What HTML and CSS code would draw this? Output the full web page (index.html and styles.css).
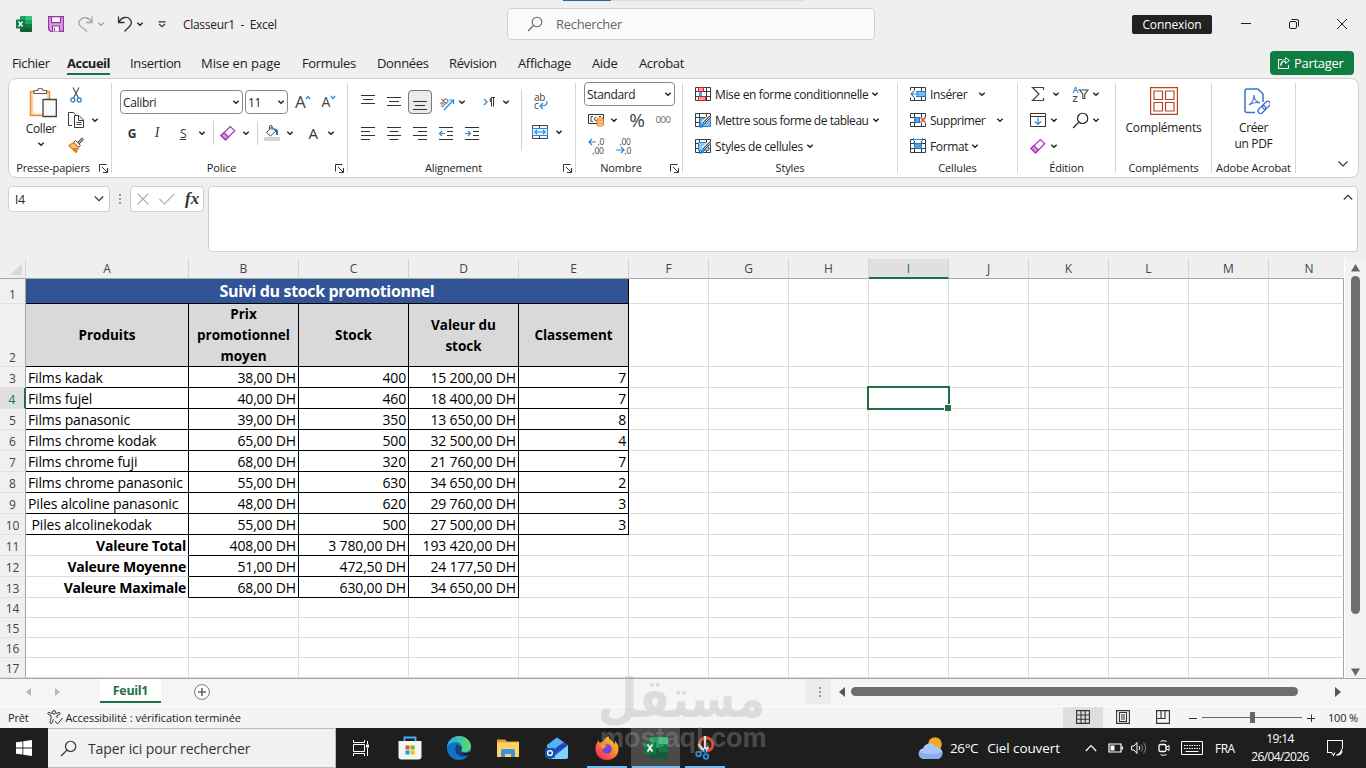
FILE: index.html
```html
<!DOCTYPE html>
<html lang="fr">

<head>
  <meta charset="UTF-8">
  <meta name="viewport" content="width=device-width, initial-scale=1.0">
  <title>Classeur1 - Excel</title>
  <link rel="stylesheet" href="styles.css">
</head>

<body>

  <!-- Shared icons -->
  <svg class="sprite" width="0" height="0">
    <symbol id="chev" viewBox="0 0 8 8"><path d="M1.3 2.700 4 5.300 6.700 2.700" fill="none" stroke="currentColor" stroke-width="1.400"/></symbol>
    <symbol id="launch" viewBox="0 0 9 9"><path d="M.5 7.5V.5h7M3 3l5 5M8.500 4v4.500H4" fill="none" stroke="#333"/></symbol>
    <symbol id="eraser" viewBox="0 0 16 16"><path d="M1 10.500 10.300 1.500l4.500 4.300L5.500 15z" fill="#fdf5ff" stroke="#9b3fa8" stroke-width="1.200"/><path d="M1 10.500 4 7.600l4.500 4.400-3 3z" fill="#d690df" stroke="#9b3fa8" stroke-width="1.200"/></symbol>
    <symbol id="loupe" viewBox="0 0 16 16"><circle cx="10" cy="6" r="4.800" fill="none" stroke="currentColor" stroke-width="1.100"/><path d="M6.500 9.500 1 15" stroke="currentColor" stroke-width="1.200"/></symbol>
    <symbol id="grid" viewBox="0 0 16 16"><path d="M.5 1.500h15v13H.5zM.5 5.500h15M.5 10.500h15M4.500 1.500v13M11.500 1.500v13" fill="#fff" stroke="#3b3b3b"/></symbol>
    <symbol id="brush" viewBox="0 0 16 16"><path d="M15.500 4 8 11" stroke="#fff" stroke-width="4"/><path d="M15.500 4.500 8.500 11.500" stroke="#444" stroke-width="2.600"/><path d="M15.300 4.700 9 11" stroke="#fff" stroke-width=".8"/><path d="M4 15.500c2 0 1.500-3.500 3.500-4l1.800 1.700c0 2-2.500 3-5.300 2.300z" fill="#2b88d8"/></symbol>
  </svg>

  <div class="window">

    <header class="titlebar">
      <svg class="app-icon" width="16" height="16" viewBox="0 0 16 16"><path d="M5 0h10a1 1 0 0 1 1 1v14a1 1 0 0 1-1 1H5a1 1 0 0 1-1-1V1a1 1 0 0 1 1-1z" fill="#21a366"/><path d="M10 0h5a1 1 0 0 1 1 1v3h-6z" fill="#33c481"/><path d="M4 8h12v7a1 1 0 0 1-1 1H5a1 1 0 0 1-1-1z" fill="#185c37"/><path d="M10 8h6v4h-6z" fill="#107c41"/><rect y="3.500" width="9" height="9" rx="1" fill="#107c41"/><path d="M2.500 5.500 6.500 10.500M6.500 5.500 2.500 10.500" stroke="#fff" stroke-width="1.400"/></svg>
      <svg class="save" width="16" height="16" viewBox="0 0 16 16"><path d="M.6.6h14.800v14.800H2.500L.6 13.500z" fill="#dc9ae4" stroke="#8e3b9b" stroke-width="1.200"/><path d="M3.500.6h9v6h-9zM4.500 15.400V10h7v5.400" fill="#fbf3fc" stroke="#8e3b9b" stroke-width="1.200"/><path d="M6.500 12v3" stroke="#8e3b9b"/></svg>
      <svg class="redo faded" width="16" height="16" viewBox="0 0 16 16"><path d="M14 .5v6H8M13.500 6C11 1 5.500.5 2.500 3.500S.8 10 5 12l4 3.500" fill="none" stroke="currentColor" stroke-width="1.300"/></svg>
      <svg class="c faded"><use href="#chev"/></svg>
      <svg class="undo" width="16" height="16" viewBox="0 0 16 16"><path d="M1.500.5v6h6M2 6C5 .5 10 .5 12.700 3s1.800 6-.7 8l-4.500 4.500" fill="none" stroke="#333" stroke-width="1.300"/></svg>
      <svg class="c"><use href="#chev"/></svg>
      <svg class="more" width="8" height="7" viewBox="0 0 8 7"><path d="M.5.800h7M1 3l3 2.800L7 3" fill="none" stroke="#333" stroke-width="1.200"/></svg>
      <span class="doc-name">Classeur1&nbsp; -&nbsp; Excel</span>
      <div class="search">
        <svg width="16" height="16"><use href="#loupe"/></svg>
        <span>Rechercher</span>
      </div>
      <button class="login">Connexion</button>
      <div class="controls">
        <svg width="12" height="12" viewBox="0 0 12 12"><path d="M1 5.500h10" stroke="#222"/></svg>
        <svg width="12" height="12" viewBox="0 0 12 12"><rect x="1.500" y="3.500" width="7" height="7" rx="1.500" fill="none" stroke="#222"/><path d="M3.500 1.500H9A1.500 1.500 0 0 1 10.500 3v5.500" fill="none" stroke="#222"/></svg>
        <svg width="12" height="12" viewBox="0 0 12 12"><path d="M1 1l10 10M11 1 1 11" stroke="#222"/></svg>
      </div>
    </header>
    <div class="load-line"><i></i></div>

    <nav class="tabs">
      <a>Fichier</a>
      <a class="active">Accueil</a>
      <a>Insertion</a>
      <a class="layout">Mise en page</a>
      <a>Formules</a>
      <a>Données</a>
      <a>Révision</a>
      <a>Affichage</a>
      <a>Aide</a>
      <a>Acrobat</a>
      <button class="share">
        <svg width="12" height="12" viewBox="0 0 12 12"><path d="M4 2.500H.5v9h10V8M2.800 8.500C3 5.500 5 4.300 7.500 4.300V6.500L11.500 3.500 7.500.6v2C5 2.800 3 4.500 2.800 8.500z" fill="none" stroke="#fff"/></svg>
        <span>Partager</span>
      </button>
    </nav>

    <section class="ribbon">
      <div class="group clipboard">
        <div class="body">
          <div class="paste">
            <svg width="28" height="31" viewBox="0 0 28 31"><path d="M1.500 4.500h19v24h-19z" fill="#fbdcae" stroke="#e3922f" stroke-width="1.500"/><path d="M4.500 7.500h13v19h-13z" fill="#fff"/><path d="M5 6.500v-3h3.500a2.800 2.800 0 0 1 5.500 0h3.500v3z" fill="#fff" stroke="#666" stroke-width="1.200"/><path d="M14 12.500h13.300v17H14z" fill="#fafafa" stroke="#444" stroke-width="1.300"/></svg>
            <span>Coller</span>
            <svg class="c"><use href="#chev"/></svg>
          </div>
          <div class="clip-tools">
            <svg width="12" height="16" viewBox="0 0 12 16"><path d="M3 .5 8.500 11M9 .5 3.500 11" stroke="#555" stroke-width="1.200"/><circle cx="2.800" cy="13" r="2" fill="#fff" stroke="#2b88d8" stroke-width="1.300"/><circle cx="9.200" cy="13" r="2" fill="#fff" stroke="#2b88d8" stroke-width="1.300"/></svg>
            <div class="pair">
              <svg width="16" height="16" viewBox="0 0 16 16"><path d="M4 13.500H.5V.5h5l2 2M4.500 4" fill="#fff" stroke="#3b3b3b"/><path d="M6.500 3.500h4.500l4.500 4.500v7.500h-9z" fill="#fff" stroke="#3b3b3b"/><path d="M10.500 4v4.500h5M8.500 10.500h5M8.500 12.500h5" fill="none" stroke="#3b3b3b"/></svg>
              <svg class="c"><use href="#chev"/></svg>
            </div>
            <svg width="16" height="16" viewBox="0 0 16 16"><path d="M15 1.500 10.500 6" stroke="#444" stroke-width="3"/><path d="M14.700 1.800 10.500 6" stroke="#fff"/><path d="M7.500 3.500l5 5-2 1.800-5-5z" fill="#fff" stroke="#444"/><path d="M5.500 5.500l5 5L8 15.500 1 8.500z" fill="#f9c27a" stroke="#e07b1a" stroke-width="1.200"/><path d="M4 11.500l5-1L8 15z" fill="#e07b1a"/></svg>
          </div>
        </div>
        <div class="caption"><span>Presse-papiers</span><svg class="l"><use href="#launch"/></svg></div>
      </div>

      <div class="group font">
        <div class="body">
          <div class="row font-top">
            <div class="combo name"><span>Calibri</span><svg class="c"><use href="#chev"/></svg></div>
            <div class="combo size"><span>11</span><svg class="c"><use href="#chev"/></svg></div>
            <div class="glyph big">A<svg width="6" height="5" viewBox="0 0 6 5"><path d="M.8 4 3 1.500 5.200 4" fill="none" stroke="#2b88d8" stroke-width="1.200"/></svg></div>
            <div class="glyph mid">A<svg width="6" height="5" viewBox="0 0 6 5"><path d="M.8 1 3 3.500 5.200 1" fill="none" stroke="#2b88d8" stroke-width="1.200"/></svg></div>
          </div>
          <div class="row font-bottom">
            <b>G</b><em>I</em><u>S</u>
            <svg class="c"><use href="#chev"/></svg>
            <i class="bar"></i>
            <svg width="16" height="16"><use href="#eraser"/></svg>
            <svg class="c"><use href="#chev"/></svg>
            <i class="bar"></i>
            <svg width="16" height="16" viewBox="0 0 16 16"><rect y="12" width="16" height="4" fill="#d4d4d4"/><path d="M7.500 2 2.500 7.500l4 3.500L12 6zM5.500 4V1.500a1 1 0 0 1 2.500 0V5" fill="#fff" stroke="#444"/><path d="M10 4.500c3-.5 3.500 2 3 5.500" fill="none" stroke="#1f6fb8" stroke-width="2"/></svg>
            <svg class="c"><use href="#chev"/></svg>
            <span class="color">A</span>
            <svg class="c"><use href="#chev"/></svg>
          </div>
        </div>
        <div class="caption"><span>Police</span><svg class="l"><use href="#launch"/></svg></div>
      </div>

      <div class="group align">
        <div class="body">
          <div class="align-main">
            <div class="row align-row">
              <svg width="16" height="16" viewBox="0 0 16 16"><path d="M1 1.500h14M3 5.500h10M1 9.500h14" stroke="#333"/></svg>
              <svg width="16" height="16" viewBox="0 0 16 16"><path d="M1 3.500h14M3 7.500h10M1 11.500h14" stroke="#333"/></svg>
              <div class="pressed"><svg width="16" height="16" viewBox="0 0 16 16"><path d="M1 7.500h14M3 11.500h10M1 15.500h14" stroke="#333"/></svg></div>
              <svg width="17" height="17" viewBox="0 0 17 17"><text x="1" y="12" transform="rotate(-45 5 9)" class="tiny">ab</text><path d="M6 16 15 6.500M11 6h4.500v4" fill="none" stroke="#2b88d8" stroke-width="1.200"/></svg>
              <svg class="c"><use href="#chev"/></svg>
              <svg width="13" height="12" viewBox="0 0 13 12"><path d="M1 3l3 3-3 3" fill="none" stroke="#2b88d8" stroke-width="1.300"/><path d="M8.500 10.500v-9h3.500M10.500 10.500v-9" stroke="#333" fill="none"/><path d="M9 1.500a2.500 2.500 0 0 0 0 5z" fill="#555"/></svg>
              <svg class="c last"><use href="#chev"/></svg>
            </div>
            <div class="row align-row">
              <svg width="16" height="16" viewBox="0 0 16 16"><path d="M1 2.500h14M1 6.500h9M1 10.500h14M1 14.500h9" stroke="#333"/></svg>
              <svg width="16" height="16" viewBox="0 0 16 16"><path d="M1 2.500h14M3.500 6.500h9M1 10.500h14M3.500 14.500h9" stroke="#333"/></svg>
              <svg width="16" height="16" viewBox="0 0 16 16"><path d="M1 2.500h14M6 6.500h9M1 10.500h14M6 14.500h9" stroke="#333"/></svg>
              <svg width="16" height="16" viewBox="0 0 16 16"><path d="M1 2.500h14M9 6.500h6M9 10.500h6M1 14.500h14" stroke="#333"/><path d="M7 8.500H1.500M4 6 1.500 8.500 4 11" fill="none" stroke="#2b88d8" stroke-width="1.200"/></svg>
              <svg width="16" height="16" viewBox="0 0 16 16"><path d="M1 2.500h14M9 6.500h6M9 10.500h6M1 14.500h14" stroke="#333"/><path d="M1 8.500h5.500M4 6l2.500 2.500L4 11" fill="none" stroke="#2b88d8" stroke-width="1.200"/></svg>
            </div>
          </div>
          <i class="bar tall"></i>
          <div class="align-side">
            <svg width="16" height="18" viewBox="0 0 16 18"><text x="2" y="8" class="wrap">ab</text><text x="2" y="16" class="wrap">c</text><path d="M15 8c.5 4-2 5-6.500 5M11 10l-3 3 3 3" fill="none" stroke="#2b88d8" stroke-width="1.200"/></svg>
            <div class="pair">
              <svg width="16" height="16" viewBox="0 0 16 16"><path d="M.5 1.500h15v13H.5zM7.500 1.500v13" fill="#fff" stroke="#3b3b3b"/><path d="M.5 4.500h15v7H.5z" fill="#e3f1fc" stroke="#2b88d8"/><path d="M3 8h10M5 6 3 8l2 2M11 6l2 2-2 2" fill="none" stroke="#2b88d8" stroke-width="1.100"/></svg>
              <svg class="c"><use href="#chev"/></svg>
            </div>
          </div>
        </div>
        <div class="caption"><span>Alignement</span><svg class="l"><use href="#launch"/></svg></div>
      </div>

      <div class="group number">
        <div class="body">
          <div class="combo format"><span>Standard</span><svg class="c"><use href="#chev"/></svg></div>
          <div class="row num-row">
            <svg width="16" height="14" viewBox="0 0 16 14"><path d="M.5 1.500h15v9H.5z" fill="#fff" stroke="#333"/><path d="M5 3.500H3v5h2M8.500 4a2 2 0 1 0 0 4M11 3.500h2" fill="none" stroke="#444"/><path d="M9 6c0-1.500 6.500-1.500 6.500 0v6c0 1.500-6.500 1.500-6.500 0z" fill="#fbd1a2" stroke="#e07b1a"/><path d="M9 6.500c1 1 5.500 1 6.500 0M9 9.500c1 1 5.500 1 6.500 0" fill="none" stroke="#e07b1a"/></svg>
            <svg class="c"><use href="#chev"/></svg>
            <span class="percent">%</span>
            <span class="thousands">000</span>
          </div>
          <div class="row dec-row">
            <svg width="17" height="18" viewBox="0 0 17 18"><text x="9.500" y="8" class="dec">,0</text><text x="4.500" y="16.500" class="dec">,00</text><path d="M8 5H1M4 2 1 5l3 3" fill="none" stroke="#2b88d8" stroke-width="1.200"/></svg>
            <svg width="17" height="18" viewBox="0 0 17 18"><text x="4.500" y="8" class="dec">,00</text><text x="9.500" y="16.500" class="dec">,0</text><path d="M1 13h8M6 10l3 3-3 3" fill="none" stroke="#2b88d8" stroke-width="1.200"/></svg>
          </div>
        </div>
        <div class="caption"><span>Nombre</span><svg class="l"><use href="#launch"/></svg></div>
      </div>

      <div class="group list styles">
        <div class="body">
          <div class="item"><svg width="16" height="16"><use href="#grid"/><path d="M3.500 1.500h5v4h-5zM3.500 10.500h7v4h-7z" fill="#ff9a9a" stroke="#c8282d"/><path d="M4 6h3v4H4z" fill="#4ba0e6"/></svg><span>Mise en forme conditionnelle</span><svg class="c"><use href="#chev"/></svg></div>
          <div class="item"><svg width="16" height="16"><use href="#grid"/><path d="M5 6h10.500v8.500H5z" fill="#7dbcf2" stroke="#2b88d8"/><use href="#brush"/></svg><span class="tight">Mettre sous forme de tableau</span><svg class="c"><use href="#chev"/></svg></div>
          <div class="item"><svg width="16" height="16"><use href="#grid"/><path d="M3.500 4.500h10v8h-10z" fill="#8fc6f5" stroke="#2b88d8"/><use href="#brush"/></svg><span>Styles de cellules</span><svg class="c"><use href="#chev"/></svg></div>
        </div>
        <div class="caption"><span>Styles</span></div>
      </div>

      <div class="group list cells">
        <div class="body">
          <div class="item wide"><svg width="16" height="16"><use href="#grid"/><path d="M5.500 5.500h10v5h-10z" fill="#7dbcf2" stroke="#1f78c8"/><path d="M0 4.500h6v7H0z" fill="#fff"/><path d="M9 8H1M4 5 1 8l3 3" fill="none" stroke="#2b88d8" stroke-width="1.200"/></svg><span>Insérer</span><svg class="c"><use href="#chev"/></svg></div>
          <div class="item wide"><svg width="16" height="16"><use href="#grid"/><path d="M0 6h4v4H0zM10 5.200h6v6h-6z" fill="#fff"/><path d="M4.500 5.500h5v5h-5z" fill="#4ba0e6" stroke="#1f78c8"/><path d="M10.500 5.500 15.500 10.500M15.500 5.500l-5 5" stroke="#e0413d" stroke-width="1.400"/></svg><span class="tight">Supprimer</span><svg class="c"><use href="#chev"/></svg></div>
          <div class="item"><svg width="16" height="16"><use href="#grid"/><path d="M3 0h10v3H3z" fill="#fff"/><path d="M3.500 0v3M12.500 0v3M3.500 1.500h9" stroke="#2b88d8"/><path d="M4.500 5.500h7v5h-7z" fill="#4ba0e6" stroke="#1f78c8"/></svg><span>Format</span><svg class="c"><use href="#chev"/></svg></div>
        </div>
        <div class="caption"><span>Cellules</span></div>
      </div>

      <div class="group edit">
        <div class="body">
          <div class="row edit-row first">
            <svg width="14" height="16" viewBox="0 0 14 16"><path d="M12.500 4V1.500H1.500L8 8l-6.500 6.500h11V12" fill="none" stroke="#444" stroke-width="1.200"/></svg>
            <svg class="c"><use href="#chev"/></svg>
            <svg width="17" height="18" viewBox="0 0 17 18"><text x=".5" y="8" class="az blue">A</text><text x=".5" y="16.500" class="az">Z</text><path d="M7.500 5h8.500l-3.200 4v4.500h-2V9z" fill="#fff" stroke="#444" stroke-width="1.100"/></svg>
            <svg class="c"><use href="#chev"/></svg>
          </div>
          <div class="row edit-row">
            <svg width="16" height="16" viewBox="0 0 16 16"><path d="M.5 1.500h15v13H.5zM.5 4.500h15" fill="#fff" stroke="#333"/><path d="M8 5.500v7M5 9.500l3 3 3-3" fill="none" stroke="#2b88d8" stroke-width="1.200"/></svg>
            <svg class="c"><use href="#chev"/></svg>
            <svg width="17" height="17" viewBox="0 0 16 16"><use href="#loupe"/></svg>
            <svg class="c last"><use href="#chev"/></svg>
          </div>
          <div class="row edit-row">
            <svg width="16" height="16"><use href="#eraser"/></svg>
            <svg class="c"><use href="#chev"/></svg>
          </div>
        </div>
        <div class="caption"><span>Édition</span></div>
      </div>

      <div class="group addins large">
        <div class="body">
          <svg width="28" height="28" viewBox="0 0 28 28"><path d="M.6.6h26.800v26.800H.6zM4 4h8.500v8.500H4zM15.500 4H24v8.500h-8.500zM4 15.500h8.500V24H4zM15.500 15.500H24V24h-8.500z" fill="none" stroke="#b5461e" stroke-width="1.200"/></svg>
          <span>Compléments</span>
        </div>
        <div class="caption"><span>Compléments</span></div>
      </div>

      <div class="group acrobat large">
        <div class="body">
          <svg width="26" height="28" viewBox="0 0 26 28"><path d="M11 24.500H3a2 2 0 0 1-2-2V3a2 2 0 0 1 2-2h11l5 5v8" fill="none" stroke="#3b6fd1" stroke-width="1.500"/><path d="M5 17c3-2 5-6 5-10 0 4 3 7 6 8-4-1-8 0-11 2z" fill="none" stroke="#3b6fd1" stroke-width="1.100"/><rect x="17" y="15.500" width="5" height="9" rx="2.500" transform="rotate(45 19.500 20) translate(0 -4)" fill="none" stroke="#3b6fd1" stroke-width="1.300"/><rect x="14" y="18.500" width="5" height="9" rx="2.500" transform="rotate(45 16.500 23) translate(0 -2)" fill="none" stroke="#3b6fd1" stroke-width="1.300"/></svg>
          <span>Créer<br>un PDF</span>
        </div>
        <div class="caption"><span>Adobe Acrobat</span></div>
      </div>

      <div class="collapse"><svg width="12" height="8" viewBox="0 0 12 8"><path d="M1.500 1.500 6 6l4.500-4.500" fill="none" stroke="#333" stroke-width="1.200"/></svg></div>
    </section>

    <section class="formula">
      <div class="name-box"><span>I4</span><svg width="10" height="8" viewBox="0 0 10 8"><path d="M.8 1.500 5 5.700l4.200-4.200" fill="none" stroke="#333" stroke-width="1.200"/></svg></div>
      <div class="dots"><i></i><i></i><i></i></div>
      <div class="fx">
        <svg width="12" height="12" viewBox="0 0 12 12"><path d="M.5.5l11 11M11.500.5l-11 11" stroke="#b0b0b0" stroke-width="1.200"/></svg>
        <svg width="16" height="12" viewBox="0 0 16 12"><path d="M.5 6 5.500 11 15.500.8" fill="none" stroke="#b0b0b0" stroke-width="1.200"/></svg>
        <em>fx</em>
      </div>
      <div class="input"><svg width="10" height="7" viewBox="0 0 10 7"><path d="M.8 5.500 5 1.300l4.200 4.200" fill="none" stroke="#333" stroke-width="1.200"/></svg></div>
    </section>

    <main class="sheet">
      <div class="cells-area">
        <table>
          <colgroup id="cols"></colgroup>
          <thead><tr id="letters"></tr></thead>
          <tbody id="rows"></tbody>
        </table>
        <div class="selection"></div>
      </div>
      <div class="vscroll">
        <svg width="9" height="8" viewBox="0 0 9 8"><path d="M4.500 0 9 7.500H0z" fill="#666"/></svg>
        <i></i>
        <svg width="9" height="8" viewBox="0 0 9 8"><path d="M4.500 8 9 .5H0z" fill="#666"/></svg>
      </div>
    </main>

    <div class="sheet-tabs">
      <svg class="prev" width="5" height="8" viewBox="0 0 5 8"><path d="M5 0v8L0 4z" fill="#b8b8b8"/></svg>
      <svg class="next" width="5" height="8" viewBox="0 0 5 8"><path d="M0 0v8l5-4z" fill="#b8b8b8"/></svg>
      <div class="tab">Feuil1</div>
      <svg class="add" width="16" height="16" viewBox="0 0 16 16"><circle cx="8" cy="8" r="7.400" fill="#fff" stroke="#777"/><path d="M8 4v8M4 8h8" stroke="#666" stroke-width="1.600"/></svg>
      <div class="hscroll">
        <div class="dots"><i></i><i></i><i></i></div>
        <svg width="8" height="10" viewBox="0 0 8 10"><path d="M7 0v10L1 5z" fill="#555"/></svg>
        <i class="thumb"></i>
        <svg width="8" height="10" viewBox="0 0 8 10"><path d="M1 0v10l6-5z" fill="#555"/></svg>
      </div>
    </div>

    <footer class="status">
      <span>Prêt</span>
      <svg class="access" width="16" height="15" viewBox="0 0 16 15"><circle cx="7" cy="2.300" r="1.700" fill="none" stroke="#333"/><path d="M5 3.500 2 2.500c-1.500 0-1.500 1.500-.5 2L4 5.500c.5 2-.5 4-1 7 .3 1.500 1.500 1.500 2 .5l1.500-4M9 3.500l3-1c1.500 0 1.500 1.500.5 2L10 5.500V8M8 11l2.500 3L15.500 8" fill="none" stroke="#333"/></svg>
      <span class="check">Accessibilité : vérification terminée</span>
      <div class="views">
        <div class="on"><svg width="14" height="14" viewBox="0 0 14 14"><path d="M.6.6h12.800v12.800H.6zM.6 5h12.800M.6 9.200h12.800M5 .6v12.800M9.200.6v12.800" fill="none" stroke="#333" stroke-width="1.100"/></svg></div>
        <div><svg width="14" height="14" viewBox="0 0 14 14"><path d="M.6.6h12.800v12.800H.6zM3.500 2.500h7v9h-7zM5 5h4M5 7h4M5 9h4" fill="none" stroke="#333" stroke-width="1.100"/></svg></div>
        <div><svg width="14" height="14" viewBox="0 0 14 14"><path d="M.6.6h12.800v12.800H.6zM.6 8.500h8.400V.6M5 .6v7.900" fill="none" stroke="#333" stroke-width="1.100"/></svg></div>
      </div>
      <div class="zoom">
        <svg width="8" height="8" viewBox="0 0 8 8"><path d="M0 4.500h8" stroke="#333"/></svg>
        <div class="track"><i></i></div>
        <svg width="8" height="8" viewBox="0 0 8 8"><path d="M0 4.500h8M4.500.5v8" stroke="#333"/></svg>
        <span>100 %</span>
      </div>
    </footer>

    <div class="taskbar">
      <div class="start"><svg width="16" height="16" viewBox="0 0 16 16"><path d="M0 2.300 6.500 1.400v6.100H0zM7.300 1.300 16 0v7.500H7.300zM0 8.400h6.500v6.200L0 13.700zM7.300 8.400H16V16l-8.700-1.200z" fill="#fff"/></svg></div>
      <div class="task-search"><svg width="17" height="17" viewBox="0 0 16 16"><use href="#loupe"/></svg><span>Taper ici pour rechercher</span></div>
      <div class="apps">
        <div><svg width="16" height="16" viewBox="0 0 16 16"><path d="M.5 0v2.500h11V0M.5 4.500h11v7H.5zM.5 16v-2.500h11V16M14.500 1v3M14.500 8v8" fill="none" stroke="#fff"/><path d="M13 4.500h3v3h-3z" fill="#fff"/></svg></div>
        <div><svg width="24" height="24" viewBox="0 0 24 24"><path d="M6.500 6V1.500h11V6" fill="none" stroke="#3fb4f0" stroke-width="1.800"/><path d="M.5 5h23v15.500a3 3 0 0 1-3 3h-17a3 3 0 0 1-3-3z" fill="#f4f4f4"/><path d="M7.500 9.500h4v4h-4z" fill="#f25022"/><path d="M12.500 9.500h4v4h-4z" fill="#7fba00"/><path d="M7.500 14.500h4v4h-4z" fill="#00a4ef"/><path d="M12.500 14.500h4v4h-4z" fill="#ffb900"/></svg></div>
        <div><svg width="24" height="24" viewBox="0 0 24 24"><defs><linearGradient id="eg" x1="0" x2="1"><stop offset="0" stop-color="#2aa7e0"/><stop offset="1" stop-color="#5fdc6b"/></linearGradient></defs><circle cx="12" cy="12" r="12" fill="#1173c4"/><path d="M0 12C0 5 5.500 0 12 0s12 5 12 10c0 4-3 6-6 6-3.500 0-4.500-1.500-3.500-3C16 9 12.500 6 9 6 4 6 .5 9 0 12z" fill="url(#eg)"/><path d="M9 10c-2.500 6 2 11.500 9 10.500 2-.3 3-1 4-1.800-5 .8-10-2-9.500-7C12.500 8.500 9.500 8 9 10z" fill="#123f7c"/><path d="M13 10.500c2 0 2 2 1.300 3 -1 2 1.500 4 5 3.500l4.500-1.500-1.500 3.500c-5 1.500-9.800-1.500-9.300-8.500z" fill="#1e1e1e"/></svg></div>
        <div><svg width="22" height="20" viewBox="0 0 22 20"><path d="M0 1.500h8l2 2h12v3H0z" fill="#e0a526"/><path d="M0 4.500h22V19H0z" fill="#fcd364"/><path d="M4 19v-6a2 2 0 0 1 2-2h10a2 2 0 0 1 2 2v6h-4v-3H8v3z" fill="#3a93dc"/></svg></div>
        <div><svg width="24" height="22" viewBox="0 0 24 22"><path d="M2 8 12 .5 23 8v12a2 2 0 0 1-2 2H4a2 2 0 0 1-2-2z" fill="#2166d1"/><path d="M2 8 12 .5l7 5L3 16z" fill="#4fb3f5"/><path d="M23 8v12a2 2 0 0 1-2 2H6z" fill="#7fd0fb"/><path d="M12 10l7-4.500L23 8 8 18z" fill="#2a45b8"/><rect y="11" width="10" height="10" rx="2" fill="#0f52ac"/><circle cx="5" cy="16" r="2.400" fill="none" stroke="#fff" stroke-width="1.400"/></svg></div>
        <div class="open"><svg width="24" height="24" viewBox="0 0 24 24"><defs><linearGradient id="ff" x1="1" y1="0" x2=".2" y2="1"><stop offset="0" stop-color="#ffdf3a"/><stop offset=".5" stop-color="#ff8a1e"/><stop offset="1" stop-color="#f5246b"/></linearGradient></defs><path d="M12 24C5 24 .5 19 .5 13c0-4 1.500-6.500 3-9 .3 1.500.7 2 1.500 3 1-1 2-1.200 3-1.200C9 3.500 11 1 13.500 0c0 4 5 4.500 6 8.500C20 7.500 20 6 20 5c2.500 2.500 3.500 5 3.500 8 0 6.500-5 11-11.500 11z" fill="url(#ff)"/><circle cx="12" cy="13" r="4.800" fill="#7a3fe0"/><path d="M5.500 9c3-1.500 5 0 6.500 1-2 1-3 1.500-3 3-2-.5-3-2-3.500-4z" fill="#ff9d2a"/></svg></div>
        <div class="open current"><svg width="24" height="22" viewBox="0 0 24 22"><path d="M6 0h18v22H6z" fill="#21a366"/><path d="M15 0h9v7h-9z" fill="#33c481"/><path d="M6 11h18v11H6z" fill="#185c37"/><path d="M15 7h9v8h-9z" fill="#107c41"/><path d="M0 5h12v12H0z" fill="#107c41"/><path d="M3.500 7.500 8.500 14.500M8.500 7.500l-5 7" stroke="#fff" stroke-width="1.800"/></svg></div>
        <div class="open"><svg width="20" height="24" viewBox="0 0 20 24"><circle cx="11" cy="8.500" r="6.800" fill="none" stroke="#d9502b" stroke-width="3"/><path d="M10 0v15M9 15 3.500 8M10 15l3.500-4" stroke="#ddd" stroke-width="2.400"/><path d="M10 13v4M8 14.500 5 17" stroke="#1f6fc0" stroke-width="2"/><circle cx="3.500" cy="18" r="2.300" fill="none" stroke="#2f8fe0" stroke-width="1.800"/><circle cx="11" cy="20.500" r="2.300" fill="none" stroke="#2f8fe0" stroke-width="1.800"/></svg></div>
      </div>
      <div class="weather">
        <svg width="25" height="22" viewBox="0 0 25 22"><circle cx="17" cy="7" r="6.800" fill="#f6a623"/><path d="M5.500 22a5.500 5.500 0 0 1-.3-10.800A7 7 0 0 1 18 10a6 6 0 0 1 1 12z" fill="#a9c6f7"/><path d="M5.500 22a5.500 5.500 0 0 1-4.500-7.500c5 3.500 15 4 23 0A6 6 0 0 1 19 22z" fill="#86aef0"/></svg>
        <span>26°C</span><span class="sky">Ciel couvert</span>
      </div>
      <div class="tray">
        <svg width="12" height="8" viewBox="0 0 12 8"><path d="M.8 7 6 1.500 11.200 7" fill="none" stroke="#fff" stroke-width="1.200"/></svg>
        <svg class="battery" width="15" height="10" viewBox="0 0 15 10"><path d="M1 1h12v8H1z" fill="none" stroke="#fff" stroke-width="1.200"/><path d="M2.500 2.500h4v5h-4zM13.500 3.500h1.500v3h-1.500z" fill="#fff"/></svg>
        <svg class="sound" width="15" height="14" viewBox="0 0 15 14"><path d="M.6 5h2.500L6 1.500v11L3.100 9H.6z" fill="none" stroke="#fff"/><path d="M8 5c1 1 1 3 0 4" fill="none" stroke="#fff"/><path d="M10 3.500c2 2 2 5 0 7M12.300 1.500c3 3 3 8 0 11" fill="none" stroke="#888"/></svg>
        <svg class="cam" width="12" height="16" viewBox="0 0 12 16"><rect x="1" y="4.500" width="7" height="7" rx="1.500" fill="none" stroke="#fff" stroke-width="1.300"/><path d="M8 7.500 11 5.500v5L8 8.500M2.500 1.500c1.500-1 4.500-1 6 0M2.500 14.500c1.500 1 4.500 1 6 0" fill="none" stroke="#fff"/></svg>
        <svg class="keys" width="22" height="14" viewBox="0 0 22 14"><path d="M.5.5h21v13H.5z" fill="none" stroke="#fff"/><path d="M3 4.500h16M3 7.500h16" stroke="#fff" stroke-dasharray="1.500 1"/><path d="M4.500 10.500h13" stroke="#fff"/></svg>
        <span class="lang">FRA</span>
        <div class="clock"><span>19:14</span><span>26/04/2026</span></div>
        <svg class="notif" width="16" height="17" viewBox="0 0 16 17"><path d="M8 12.500 6.500 15.500 4.500 12.500H.5V.5h15V9" fill="none" stroke="#fff" stroke-width="1.100"/><path d="M14.500 9.500c1.500 4-1.500 6-5 5.500 2-.5 4.500-2.500 5-5.500z" fill="#ddd" stroke="#fff"/></svg>
      </div>
    </div>

    <div class="watermark">
      <span class="ar" lang="ar" dir="rtl">مستقل</span>
      <span class="lat">mostaql.com</span>
    </div>
  </div>

  <script>
    const letters = 'ABCDEFGHIJKLMN'.split('');
    const widths = [26, 163, 110, 110, 110, 110, 80, 80, 80, 80, 80, 80, 80, 80, 75];
    const products = [
      ['Films kadak', '38,00 DH', '400', '15 200,00 DH', '7'],
      ['Films fujel', '40,00 DH', '460', '18 400,00 DH', '7'],
      ['Films panasonic', '39,00 DH', '350', '13 650,00 DH', '8'],
      ['Films chrome kodak', '65,00 DH', '500', '32 500,00 DH', '4'],
      ['Films chrome fuji', '68,00 DH', '320', '21 760,00 DH', '7'],
      ['Films chrome panasonic', '55,00 DH', '630', '34 650,00 DH', '2'],
      ['Piles alcoline panasonic', '48,00 DH', '620', '29 760,00 DH', '3'],
      ['\u00a0Piles alcolinekodak', '55,00 DH', '500', '27 500,00 DH', '3']
    ];
    const totals = [
      ['Valeure Total', '408,00 DH', '3 780,00 DH', '193 420,00 DH'],
      ['Valeure Moyenne', '51,00 DH', '472,50 DH', '24 177,50 DH'],
      ['Valeure Maximale', '68,00 DH', '630,00 DH', '34 650,00 DH']
    ];

    document.getElementById('cols').innerHTML = widths.map(w => `<col style="width:${w}px">`).join('');
    document.getElementById('letters').innerHTML = '<th class="corner"></th>' +
      letters.map(l => `<th class="${l === 'I' ? 'sel' : ''}">${l}</th>`).join('');

    const empty = n => '<td></td>'.repeat(n);
    let html = `<tr class="r1"><th>1</th><td colspan="5" class="title">Suivi du stock promotionnel</td>${empty(9)}</tr>`;
    html += '<tr class="r2"><th>2</th>' +
      ['Produits', 'Prix promotionnel moyen', 'Stock', 'Valeur du stock', 'Classement']
        .map(h => `<td class="head"><div>${h}</div></td>`).join('') + empty(9) + '</tr>';

    products.forEach((p, i) => {
      const cells = p.map((v, c) => `<td class="box ${c === 0 ? 'label' : 'num'}">${v}</td>`).join('');
      html += `<tr><th class="${i === 1 ? 'sel' : ''}">${i + 3}</th>${cells}${empty(9)}</tr>`;
    });
    totals.forEach((t, i) => {
      const cells = t.map((v, c) => `<td class="${c === 0 ? 'total' : 'box num'}">${v}</td>`).join('');
      html += `<tr><th>${i + 11}</th>${cells}${empty(10)}</tr>`;
    });
    for (let r = 14; r <= 17; r++) {
      html += `<tr class="short"><th>${r}</th>${empty(14)}</tr>`;
    }
    document.getElementById('rows').innerHTML = html;
  </script>

</body>

</html>
```
FILE: styles.css
```css
* {
  box-sizing: border-box;
}

body {
  margin: 0;
  font-family: "Open Sans", "Noto Sans", sans-serif;
  font-size: 12px;
  color: #222;
  background: #efefef;
}

svg {
  display: block;
  flex: none;
}

.sprite {
  position: absolute;
}

button {
  font-family: inherit;
  border: none;
  padding: 0;
}

.window {
  position: relative;
  width: 1366px;
  height: 768px;
  display: flex;
  flex-direction: column;
  overflow: hidden;
}

.c {
  width: 8px;
  height: 8px;
  color: #222;
}

.l {
  width: 9px;
  height: 9px;
}

/* title bar */
.titlebar {
  height: 48px;
  display: flex;
  align-items: center;
  padding-left: 16px;
}

.save { margin-left: 16px; }
.redo { margin: 0 3px 0 14px; }
.undo { margin: 0 3px 0 12px; }
.more { margin-left: 14px; }

.faded,
.c.faded {
  color: #a5a5a5;
}

.doc-name {
  margin-left: 17px;
  width: 324px;
  letter-spacing: -0.3px;
}

.search {
  display: flex;
  align-items: center;
  gap: 13px;
  width: 368px;
  height: 32px;
  padding-left: 19px;
  border: 1px solid #d2d2d2;
  border-radius: 4px;
  background: #fafafa;
  color: #666;
  font-size: 13px;
  letter-spacing: -0.3px;
}

.login {
  width: 80px;
  height: 19px;
  margin-left: 257px;
  border-radius: 2px;
  background: #222;
  color: #fff;
  font-size: 12px;
  letter-spacing: -0.1px;
}

.controls {
  display: flex;
  gap: 36px;
  margin-left: 28px;
}

/* thin line at the very top of the window */
.load-line {
  position: absolute;
  left: 563px;
  top: 0;
  width: 241px;
  height: 1px;
  background: #dcdcdc;
}

.load-line i {
  display: block;
  width: 48px;
  height: 1px;
  background: #2a66a8;
}

/* tabs */
.tabs {
  height: 30px;
  display: grid;
  grid-template-columns: 55px 63px 71px 101px 75px 72px 69px 74px 47px 1fr 84px;
  align-items: center;
  justify-items: start;
  padding: 0 12px;
  font-size: 13px;
  letter-spacing: -0.35px;
}

.tabs a {
  height: 24px;
  line-height: 24px;
  white-space: nowrap;
}

.tabs .layout { letter-spacing: -0.05px; }

.tabs .active {
  font-weight: bold;
  letter-spacing: -0.5px;
  border-bottom: 2px solid #1e7145;
}

.share {
  display: flex;
  align-items: center;
  gap: 4px;
  width: 84px;
  height: 24px;
  padding-left: 8px;
  border-radius: 4px;
  background: #107c41;
  color: #fff;
  font-size: 13px;
  letter-spacing: -0.3px;
}

/* ribbon */
.ribbon {
  display: grid;
  grid-template-columns: 103px 236px 228px 107px 215px 120px 98px 96px 84px 1fr;
  width: 1351px;
  height: 100px;
  margin-left: 8px;
  border: 1px solid #d0d0d0;
  border-radius: 8px;
  background: #fff;
  letter-spacing: -0.35px;
}

.group {
  height: 90px;
  margin-top: 4px;
  border-right: 1px solid #d6d6d6;
  display: flex;
  flex-direction: column;
}

.group .body {
  flex: none;
  height: 76px;
  display: flex;
}

.caption {
  position: relative;
  flex: none;
  height: 16px;
  padding-top: 1px;
  line-height: 16px;
  font-size: 11px;
  letter-spacing: -0.15px;
  text-align: center;
  white-space: nowrap;
}

.caption .l {
  position: absolute;
  right: 3px;
  top: 5px;
}

.font .caption,
.align .caption,
.number .caption {
  padding-right: 16px;
}

.clipboard .caption {
  padding-right: 14px;
}

.row {
  display: grid;
  align-items: center;
  justify-items: center;
}

.pair {
  display: flex;
  align-items: center;
}

.paste {
  width: 50px;
  margin-left: 7px;
  padding-top: 4px;
  display: flex;
  flex-direction: column;
  align-items: center;
  font-size: 12px;
}

.paste svg:first-child { margin-left: 4px; }
.paste span { height: 20px; line-height: 20px; margin-top: 1px; }
.paste .c { margin-top: 1px; }

.clip-tools {
  display: flex;
  flex-direction: column;
  gap: 9px;
  margin: 4px 0 0 2px;
}

.clip-tools > svg:first-child { margin-left: 2px; }
.clip-tools .pair { gap: 7px; }

.combo {
  display: flex;
  align-items: center;
  justify-content: space-between;
  height: 24px;
  padding: 0 2px 0 2px;
  border: 1px solid #8a8a8a;
  border-radius: 4px;
  background: #fff;
}

.combo.name { width: 123px; }
.combo.size { width: 43px; }

.font .body {
  flex-direction: column;
  padding: 7px 0 0 8px;
  gap: 7px;
}

.font-top {
  display: flex;
  gap: 2px;
}

.glyph {
  display: flex;
  font-size: 17px;
  line-height: 20px;
  color: #444;
}

.glyph.big { margin-left: 5px; }
.glyph.mid { margin-left: 8px; font-size: 14px; }
.glyph svg { margin-top: 3px; }

.font-bottom {
  height: 24px;
  grid-template-columns: 24px 26px 26px 12px 10px 20px 16px 6px 24px 12px 34px 2px;
  color: #333;
}

.font-bottom em {
  font-family: "Liberation Serif", serif;
  font-size: 14px;
}

.font-bottom .color {
  font-size: 15px;
  line-height: 18px;
}

.bar {
  width: 1px;
  height: 24px;
  background: #d0d0d0;
}

.bar.tall { height: 62px; margin-top: 6px; }

.align-main {
  width: 173px;
  padding-top: 7px;
  display: flex;
  flex-direction: column;
  gap: 7px;
}

.align-row {
  height: 24px;
  grid-template-columns: 26px 26px 26px 26px 6px 48px 0;
  padding-left: 7px;
}

.align-row + .align-row {
  grid-template-columns: repeat(5, 26px);
}

.align-row .last { margin-left: -14px; }

.pressed {
  width: 24px;
  height: 24px;
  padding: 3px;
  border: 1px solid #777;
  border-radius: 4px;
  background: #ebebeb;
}

.align-side {
  display: flex;
  flex-direction: column;
  gap: 13px;
  margin: 10px 0 0 10px;
}

.align-side .pair { gap: 7px; }

svg text {
  font-family: "Open Sans", sans-serif;
  fill: #444;
  letter-spacing: -0.3px;
}

.tiny { font-size: 9px; }
.wrap { font-size: 10px; }
.dec { font-size: 8.5px; }
.az { font-size: 9px; font-weight: 600; }
svg text.blue { fill: #2b88d8; }

.number .body {
  flex-direction: column;
  padding: 0 0 0 8px;
}

.combo.format {
  width: 91px;
  margin-top: -1px;
  flex: none;
}

.num-row {
  height: 27px;
  justify-content: start;
  grid-template-columns: 24px 12px 34px 18px;
}

.percent { font-size: 19px; line-height: 20px; color: #444; }
.thousands { font-size: 9.5px; color: #666; }

.dec-row {
  height: 26px;
  justify-content: start;
  grid-template-columns: 24px 30px;
}

.list .body {
  flex-direction: column;
  padding-left: 12px;
}

.item {
  display: flex;
  align-items: center;
  gap: 4px;
  height: 26px;
  white-space: nowrap;
}

.item .tight { letter-spacing: -0.46px; }

.group.list .body { margin-top: -2px; height: 78px; }
.item .c { margin-left: -1px; }
.item.wide .c { margin-left: 7px; }

.edit .body {
  flex-direction: column;
}

.group.edit .body { margin-top: -2px; height: 78px; }

.edit-row {
  height: 26px;
  justify-content: start;
  padding-left: 10px;
  grid-template-columns: 20px 12px 40px 0;
}

.edit-row.first { grid-template-columns: 20px 16px 32px 0; }
.edit-row .last { margin-left: -8px; }

.large .body {
  flex-direction: column;
  align-items: center;
  padding-top: 4px;
  text-align: center;
  line-height: 16px;
}

.large .body span { margin-top: 5px; }
.acrobat .body svg { margin: 1px 0 -1px 6px; }
.acrobat .caption { letter-spacing: -0.1px; }
.addins .body { letter-spacing: -0.2px; }

.collapse {
  align-self: end;
  justify-self: end;
  margin: 0 9px 9px 0;
}

/* formula bar */
.formula {
  display: flex;
  align-items: flex-start;
  height: 81px;
  padding: 8px 0 0 8px;
}

.name-box,
.fx,
.input {
  border: 1px solid #d0d0d0;
  border-radius: 4px;
  background: #fff;
}

.name-box {
  display: flex;
  align-items: center;
  justify-content: space-between;
  width: 102px;
  height: 26px;
  padding: 0 5px 0 6px;
}

.dots {
  display: flex;
  flex-direction: column;
  gap: 2px;
}

.dots i {
  width: 2px;
  height: 2px;
  background: #999;
}

.formula .dots { margin: 8px 9px 0 9px; }

.fx {
  display: flex;
  align-items: center;
  width: 74px;
  height: 26px;
  padding-left: 6px;
  gap: 10px;
}

.fx em {
  font-family: "Liberation Serif", serif;
  font-weight: bold;
  font-size: 17px;
  color: #333;
}

.input {
  display: flex;
  justify-content: flex-end;
  width: 1150px;
  height: 66px;
  margin-left: 4px;
  padding: 7px 4px 0 0;
}

/* worksheet */
.sheet {
  display: flex;
  height: 420px;
  border-bottom: 1px solid #a6a6a6;
}

.cells-area {
  position: relative;
  width: 1345px;
  height: 419px;
  overflow: hidden;
  background: #fff;
}

table {
  width: 1344px;
  table-layout: fixed;
  border-spacing: 0;
}

th,
td {
  padding: 0;
  overflow: hidden;
  white-space: nowrap;
}

thead th {
  height: 20px;
  background: #efefef;
  border-right: 1px solid #d4d4d4;
  border-bottom: 1px solid #a6a6a6;
  font-weight: normal;
  font-size: 12px;
  line-height: 17px;
  color: #444;
}

thead th:last-child {
  padding-left: 5px;
  border-right: none;
}

thead .sel {
  background: #e0e0e0;
  border-bottom: 2px solid #1e7145;
  color: #1e7145;
}

thead .corner {
  background: linear-gradient(135deg, transparent 50%, #d8d8d8 50%) 10px 5px / 12px 11px no-repeat #efefef;
}

tbody th {
  height: 21px;
  background: #f0f0f0;
  border-right: 1px solid #a6a6a6;
  border-bottom: 1px solid #e0e0e0;
  font-weight: normal;
  font-size: 12px;
  line-height: 15px;
  vertical-align: bottom;
  padding-bottom: 1px;
  color: #444;
}

tbody .sel {
  background: #e0e0e0;
  border-right: 2px solid #1e7145;
  color: #1e7145;
}

td {
  border-right: 1px solid #dcdcdc;
  border-bottom: 1px solid #dcdcdc;
  font-size: 14px;
  line-height: 19px;
  letter-spacing: -0.15px;
  color: #000;
}

td:last-child { border-right-color: #a6a6a6; }

.r1 th { height: 25px; }
.r2 th { height: 63px; }
.short th { height: 20px; }

.title {
  background: #305496;
  border-color: #000;
  color: #fff;
  font-size: 16px;
  font-weight: bold;
  letter-spacing: -0.35px;
  text-align: center;
}

.head {
  padding: 0 4px;
  background: #d9d9d9;
  border-color: #000;
  font-weight: bold;
  font-size: 13.5px;
  line-height: 21px;
  letter-spacing: 0;
  text-align: center;
  white-space: normal;
}

.head div {
  margin: 0 0 -1px;
  padding: 0 1px;
}

.box { border-color: #000; }
.label { padding-left: 2px; }
.num { text-align: right; padding-right: 2px; }

.total {
  border-right-color: #000;
  padding-right: 2px;
  font-weight: bold;
  letter-spacing: -0.25px;
  text-align: right;
}

.selection {
  position: absolute;
  left: 867px;
  top: 127px;
  width: 83px;
  height: 24px;
  border: 2px solid #1e7145;
}

.selection::after {
  content: "";
  position: absolute;
  right: -3px;
  bottom: -3px;
  width: 6px;
  height: 6px;
  border: 1px solid #fff;
  border-width: 1px 0 0 1px;
  background: #1e7145;
}

.vscroll {
  width: 21px;
  height: 419px;
  display: flex;
  flex-direction: column;
  align-items: center;
  justify-content: space-between;
  padding: 5px 0 2px;
  background: #f3f3f3;
}

.vscroll i {
  width: 9px;
  height: 338px;
  margin: 0 0 50px;
  border-radius: 5px;
  background: #6e6e6e;
}

/* sheet tabs */
.sheet-tabs {
  display: flex;
  height: 28px;
  background: #f5f5f5;
  border-bottom: 1px solid #fff;
}

.prev { margin: 9px 0 0 26px; }
.next { margin: 9px 0 0 24px; }

.tab {
  width: 61px;
  height: 24px;
  margin-left: 40px;
  border-bottom: 2px solid #1e7145;
  background: #fff;
  color: #1e7145;
  font-weight: bold;
  font-size: 12.5px;
  line-height: 24px;
  letter-spacing: -0.3px;
  text-align: center;
}

.add { margin: 5px 0 0 33px; }

.hscroll {
  display: flex;
  align-items: center;
  height: 25px;
  margin-left: 596px;
}

.hscroll .dots {
  width: 25px;
  height: 25px;
  padding-left: 13px;
  padding-top: 8px;
  background: #ececec;
}

.hscroll .dots + svg { margin-left: 7px; }

.thumb {
  width: 447px;
  height: 9px;
  margin: 0 36px 0 5px;
  border-radius: 5px;
  background: #6e6e6e;
}

/* status bar */
.status {
  display: flex;
  align-items: center;
  height: 21px;
  padding-left: 8px;
  background: #f4f4f4;
  font-size: 11px;
  letter-spacing: -0.2px;
}

.status > span { margin-top: -1px; }
.access { margin: 0 2px 0 19px; }
.check { letter-spacing: -0.04px; }

.views {
  display: flex;
  margin-left: auto;
}

.views div {
  width: 40px;
  height: 21px;
  padding: 3px 0 0 13px;
}

.views .on { background: #dedede; }

.zoom {
  display: flex;
  align-items: center;
  width: 183px;
  padding-left: 6px;
}

.track {
  width: 100px;
  height: 1px;
  margin: 0 5px;
  background: #666;
}

.track i {
  display: block;
  width: 5px;
  height: 11px;
  margin: -5px 0 0 48px;
  background: #666;
}

.zoom span {
  margin-left: 13px;
  white-space: nowrap;
}

/* taskbar */
.taskbar {
  display: flex;
  align-items: center;
  height: 40px;
  background: #1e1e1e;
  color: #fff;
}

.start { width: 48px; padding-left: 16px; }

.task-search {
  display: flex;
  align-items: center;
  gap: 11px;
  width: 288px;
  height: 40px;
  padding-left: 12px;
  border: 1px solid #bbb;
  border-width: 1px 1px 1px 0;
  background: #f1f1f1;
  color: #333;
  font-size: 14px;
  letter-spacing: -0.1px;
}

.apps {
  display: flex;
  width: 393px;
  height: 40px;
}

.apps > div {
  display: flex;
  align-items: center;
  justify-content: center;
  width: 49.2px;
  flex: none;
  height: 40px;
}

.apps .open {
  background: linear-gradient(#76b9ed, #76b9ed) center bottom / 40px 2px no-repeat;
}

.apps .current {
  background: linear-gradient(#76b9ed, #76b9ed) center bottom / 48px 2px no-repeat, #4a4a4a;
}

.weather {
  display: flex;
  align-items: center;
  gap: 7px;
  width: 156px;
  margin-left: 189px;
  font-size: 13.5px;
  letter-spacing: -0.4px;
  white-space: nowrap;
}

.sky {
  margin-left: 2px;
  letter-spacing: -0.1px;
}

.tray {
  display: flex;
  align-items: center;
  margin-left: 11px;
}

.battery { margin-left: 11px; }
.sound { margin-left: 8px; }
.cam { margin-left: 12px; }
.keys { margin-left: 11px; }

.lang {
  width: 22px;
  margin-left: 12px;
  letter-spacing: -0.5px;
}

.clock {
  display: flex;
  flex-direction: column;
  align-items: center;
  width: 64px;
  margin-left: 11px;
  line-height: 18px;
  letter-spacing: -0.6px;
}

.notif { margin-left: 15px; }

/* overlaid site mark */
.watermark {
  position: absolute;
  left: 600px;
  top: 672px;
  width: 166px;
  height: 80px;
  color: #a8a8a8;
  opacity: 0.32;
  white-space: nowrap;
}

.ar {
  position: absolute;
  right: 1px;
  top: -8px;
  font-family: "DejaVu Sans", sans-serif;
  font-weight: bold;
  font-size: 54px;
  line-height: 70px;
  transform: scaleX(0.85);
  transform-origin: right center;
}

.lat {
  position: absolute;
  left: 0;
  top: 51px;
  font-family: "Liberation Sans", sans-serif;
  font-weight: bold;
  font-size: 27px;
  line-height: 30px;
}
```
